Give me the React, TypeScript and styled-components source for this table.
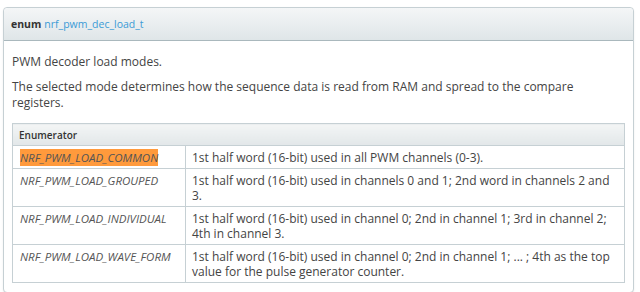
import React from 'react'
import styled, { createGlobalStyle } from 'styled-components'

const GlobalStyle = createGlobalStyle`
  body {
    margin: 0;
    background: #ffffff;
    font-family: "Open Sans", "DejaVu Sans", sans-serif;
    color: #444444;
  }
`

const Page = styled.div`
  padding: 7px 6px 0 3px;
  border-top: 2px solid #eeeeee;
  margin-top: -2px;
`

const Panel = styled.div`
  border: 1px solid #c6d0d4;
  border-radius: 4px;
  box-shadow: 0 1px 2px rgba(0, 0, 0, 0.08);
  background: #ffffff;
`

const PanelHeader = styled.div`
  height: 32px;
  display: flex;
  align-items: center;
  padding: 0 7px;
  background: linear-gradient(#f4f6f7, #dfe6e8);
  border-bottom: 1px solid #aab8bd;
  border-radius: 4px 4px 0 0;
  font-size: 10.5px;
  color: #333333;
`

const Keyword = styled.b`
  margin-right: 3px;
`

const TypeLink = styled.a`
  color: #3b9bd6;
  text-decoration: none;
`

const PanelBody = styled.div`
  padding: 13px 8px 9px 8px;
`

const Para = styled.p`
  margin: 0 0 9px 0;
  font-size: 12px;
  line-height: 16px;
  color: #444444;
`

const Table = styled.table`
  width: 100%;
  border-collapse: collapse;
  margin-top: 12px;
  border: 1px solid #c6d0d4;
`

const HeadCell = styled.th`
  text-align: left;
  height: 21px;
  padding: 0 6px;
  font-size: 10px;
  font-weight: 600;
  color: #333333;
  background: linear-gradient(#f3f5f5, #e2e7e9);
  border-bottom: 1px solid #c6d0d4;
`

const Row = styled.tr`
  border-top: 1px solid #c6d0d4;
`

const NameCell = styled.td`
  width: 158px;
  padding: 4px 7px 3px 7px;
  vertical-align: top;
  border-right: 1px solid #c6d0d4;
  font-size: 11.5px;
  line-height: 15px;
  font-style: italic;
  color: #555555;
`

const Name = styled.span<{ $hit?: boolean }>`
  background: ${(p) => (p.$hit ? '#ff9a3c' : 'transparent')};
  padding: 1px 0;
`

const DescCell = styled.td`
  padding: 4px 6px 3px 6px;
  vertical-align: top;
  font-size: 12px;
  line-height: 15px;
  color: #444444;
`

const rows = [
  { name: 'NRF_PWM_LOAD_COMMON', desc: '1st half word (16-bit) used in all PWM channels (0-3).', hit: true },
  { name: 'NRF_PWM_LOAD_GROUPED', desc: '1st half word (16-bit) used in channels 0 and 1; 2nd word in channels 2 and 3.' },
  { name: 'NRF_PWM_LOAD_INDIVIDUAL', desc: '1st half word (16-bit) used in channel 0; 2nd in channel 1; 3rd in channel 2; 4th in channel 3.' },
  { name: 'NRF_PWM_LOAD_WAVE_FORM', desc: '1st half word (16-bit) used in channel 0; 2nd in channel 1; ... ; 4th as the top value for the pulse generator counter.' },
]

export default function App() {
  return (
    <Page>
      <GlobalStyle />
      <Panel>
        <PanelHeader>
          <Keyword>enum</Keyword>
          <TypeLink href="#">nrf_pwm_dec_load_t</TypeLink>
        </PanelHeader>
        <PanelBody>
          <Para>PWM decoder load modes.</Para>
          <Para>The selected mode determines how the sequence data is read from RAM and spread to the compare registers.</Para>
          <Table>
            <thead>
              <tr>
                <HeadCell colSpan={2}>Enumerator</HeadCell>
              </tr>
            </thead>
            <tbody>
              {rows.map((r) => (
                <Row key={r.name}>
                  <NameCell>
                    <Name $hit={r.hit}>{r.name}</Name>
                  </NameCell>
                  <DescCell>{r.desc}</DescCell>
                </Row>
              ))}
            </tbody>
          </Table>
        </PanelBody>
      </Panel>
    </Page>
  )
}
